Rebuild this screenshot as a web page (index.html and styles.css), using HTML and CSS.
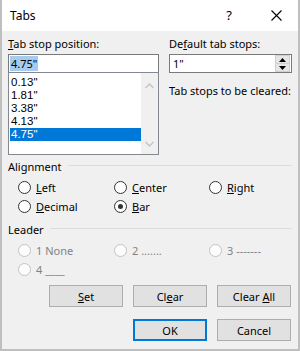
FILE: index.html
```html
<!DOCTYPE html>
<html lang="en">

<head>
    <meta charset="UTF-8">
    <meta name="viewport" content="width=device-width, initial-scale=1.0">
    <title>Tabs</title>
    <link rel="stylesheet" href="styles.css">
</head>

<body>
    <div class="window">
        <div class="titlebar">
            <span class="title">Tabs</span>
            <span class="help">?</span>
            <span class="close">
                <svg width="11" height="11" viewBox="0 0 11 11">
                    <path d="M0.5 0.5 L10.5 10.5 M10.5 0.5 L0.5 10.5" stroke="#000" stroke-width="1.1" fill="none"/>
                </svg>
            </span>
        </div>

        <div class="content">
            <div class="top">
                <div class="col-left">
                    <div class="label"><u>T</u>ab stop position:</div>
                    <div class="textbox"><span class="selected-text">4.75"</span></div>
                    <div class="listbox">
                        <div class="items">
                            <div class="item">0.13"</div>
                            <div class="item">1.81"</div>
                            <div class="item">3.38"</div>
                            <div class="item">4.13"</div>
                            <div class="item active">4.75"</div>
                        </div>
                        <div class="scrollbar">
                            <svg width="17" height="12" viewBox="0 0 17 12">
                                <polyline points="4.5,8 8.5,4 12.5,8" stroke="#c5c5c5" stroke-width="1.5" fill="none"/>
                            </svg>
                            <svg width="17" height="12" viewBox="0 0 17 12">
                                <polyline points="4.5,4 8.5,8 12.5,4" stroke="#c5c5c5" stroke-width="1.5" fill="none"/>
                            </svg>
                        </div>
                    </div>
                </div>

                <div class="col-right">
                    <div class="label">De<u>f</u>ault tab stops:</div>
                    <div class="textbox spin">
                        <span class="value">1"</span>
                        <div class="spin-buttons">
                            <div class="spin-btn">
                                <svg width="7" height="4" viewBox="0 0 7 4"><polygon points="0,4 3.5,0 7,4" fill="#000"/></svg>
                            </div>
                            <div class="spin-btn">
                                <svg width="7" height="4" viewBox="0 0 7 4"><polygon points="0,0 3.5,4 7,0" fill="#000"/></svg>
                            </div>
                        </div>
                    </div>
                    <div class="label cleared">Tab stops to be cleared:</div>
                </div>
            </div>

            <div class="group-title">Alignment</div>
            <div class="radio-grid">
                <div class="radio"><span class="circle"></span><u>L</u>eft</div>
                <div class="radio"><span class="circle"></span><u>C</u>enter</div>
                <div class="radio"><span class="circle"></span><u>R</u>ight</div>
                <div class="radio"><span class="circle"></span><u>D</u>ecimal</div>
                <div class="radio"><span class="circle checked"></span><u>B</u>ar</div>
            </div>

            <div class="group-title leader">Leader</div>
            <div class="radio-grid disabled">
                <div class="radio"><span class="circle"></span>1 None</div>
                <div class="radio"><span class="circle"></span>2 .......</div>
                <div class="radio"><span class="circle"></span>3 -------</div>
                <div class="radio"><span class="circle"></span>4 ____</div>
            </div>

            <div class="buttons">
                <button class="btn"><u>S</u>et</button>
                <button class="btn">Cl<u>e</u>ar</button>
                <button class="btn">Clear <u>A</u>ll</button>
            </div>
            <div class="buttons last">
                <button class="btn default">OK</button>
                <button class="btn">Cancel</button>
            </div>
        </div>
    </div>
</body>
</html>
```

FILE: styles.css
```css
body {
    margin: 0;
    font-family: 'Noto Sans', sans-serif;
    font-size: 11px;
    color: #000;
    background-color: #f0f0f0;
}

.window {
    width: 296px;
    height: 349px;
    border: 2px solid #bfbfbf;
    border-top: none;
    background-color: #f0f0f0;
}

.titlebar {
    height: 31px;
    background-color: #fff;
    display: flex;
    align-items: center;
    padding-left: 8px;
}

.title {
    font-size: 12px;
    flex: 1;
    margin-top: -1px;
}

.help {
    font-size: 13px;
    width: 12px;
    text-align: center;
    margin-right: 36px;
    margin-top: -1px;
}

.close {
    display: flex;
    margin-right: 16px;
    margin-top: -1px;
}

.content {
    padding: 5px 6px 0 6px;
}

.top {
    display: flex;
    gap: 10px;
}

.col-left {
    width: 151px;
}

.col-right {
    width: 123px;
}

.label {
    height: 16px;
    line-height: 16px;
    margin-bottom: 2px;
}

.label.cleared {
    margin-top: 10px;
}

.textbox {
    height: 17px;
    border: 1px solid #7a7a7a;
    background-color: #fff;
    display: flex;
    align-items: center;
    padding-left: 1px;
}

.selected-text {
    background-color: #a6cbef;
    line-height: 15px;
    padding: 0 1px;
}

.spin .value {
    flex: 1;
    padding-left: 2px;
}

.spin-buttons {
    width: 15px;
    height: 17px;
    margin-right: 1px;
    display: flex;
    flex-direction: column;
}

.spin-btn {
    flex: 1;
    background-color: #e6e6e6;
    border: 1px solid #d0d0d0;
    display: flex;
    align-items: center;
    justify-content: center;
}

.spin-btn + .spin-btn {
    border-top: none;
}

.listbox {
    margin-top: -1px;
    height: 81px;
    border: 1px solid #828790;
    background-color: #fff;
    display: flex;
}

.items {
    flex: 1;
    padding: 3px 0 0 1px;
    font-family: 'Liberation Sans', sans-serif;
    font-size: 11.5px;
}

.item {
    height: 13px;
    line-height: 13px;
    padding-left: 1px;
}

.item.active {
    background-color: #0078d7;
    color: #fff;
}

.scrollbar {
    width: 17px;
    background-color: #f0f0f0;
    display: flex;
    flex-direction: column;
    justify-content: space-between;
    padding: 7px 0 4px 0;
}

.group-title {
    display: flex;
    align-items: center;
    height: 16px;
    margin-top: 3px;
}

.group-title::after {
    content: '';
    flex: 1;
    height: 1px;
    background-color: #dcdcdc;
    margin-left: 6px;
    margin-top: -1px;
}

.group-title.leader {
    margin-top: 5px;
}

.radio-grid {
    display: grid;
    grid-template-columns: 96px 95px 80px;
    grid-auto-rows: 19px;
    padding-left: 10px;
    margin-top: 4px;
}

.radio {
    display: flex;
    align-items: center;
}

.circle {
    width: 11px;
    height: 11px;
    border: 1px solid #333;
    border-radius: 50%;
    background-color: #fff;
    margin-right: 5px;
    position: relative;
}

.circle.checked::after {
    content: '';
    position: absolute;
    left: 3px;
    top: 3px;
    width: 5px;
    height: 5px;
    border-radius: 50%;
    background-color: #333;
}

.disabled .radio {
    color: #838383;
}

.disabled .circle {
    border-color: #c4c4c4;
    background-color: #fcfcfc;
}

.buttons {
    display: flex;
    justify-content: flex-end;
    gap: 10px;
    margin-top: 6px;
    padding-right: 1px;
}

.buttons.last {
    margin-top: 12px;
}

.btn {
    width: 74px;
    height: 22px;
    padding: 0;
    font-family: 'Noto Sans', sans-serif;
    font-size: 11px;
    color: #000;
    background-color: #e1e1e1;
    border: 1px solid #adadad;
}

.btn.default {
    border: 2px solid #0078d7;
}
```
